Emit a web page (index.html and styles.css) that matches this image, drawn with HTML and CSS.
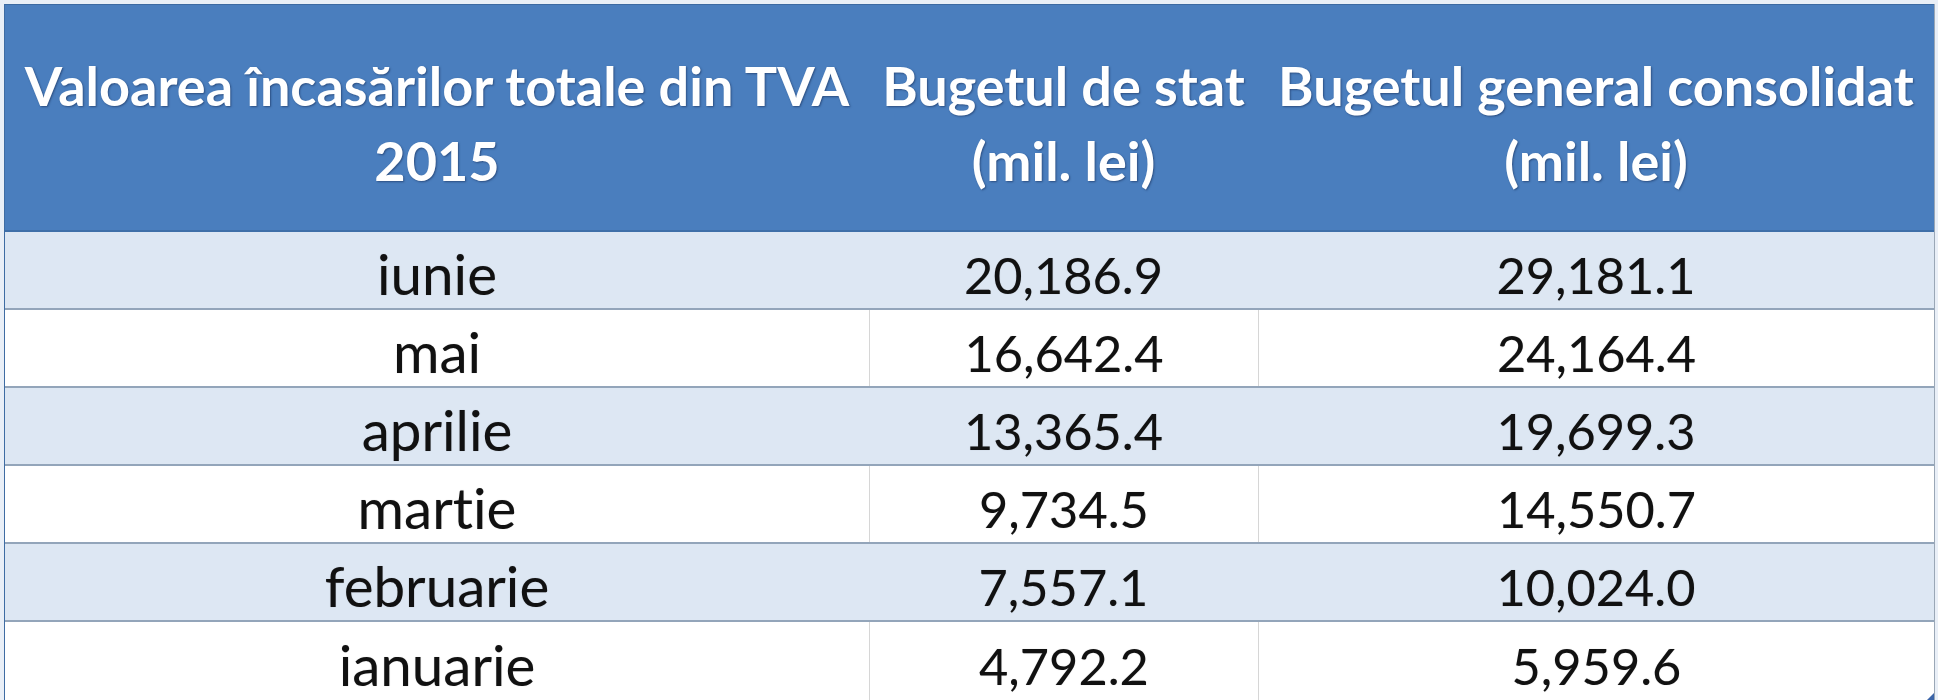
FILE: index.html
```html
<!DOCTYPE html>
<html lang="ro">
<head>
<meta charset="utf-8">
<title>Valoarea încasărilor totale din TVA 2015</title>
<link rel="stylesheet" href="styles.css">
</head>
<body>
<div class="sheet">
  <div class="table">
    <div class="row head">
      <div class="cell">Valoarea încasărilor totale din TVA<br>2015</div>
      <div class="cell">Bugetul de stat<br>(mil. lei)</div>
      <div class="cell">Bugetul general consolidat<br>(mil. lei)</div>
    </div>
    <div class="row band">
      <div class="cell month">iunie</div>
      <div class="cell">20,186.9</div>
      <div class="cell">29,181.1</div>
    </div>
    <div class="row plain">
      <div class="cell month">mai</div>
      <div class="cell">16,642.4</div>
      <div class="cell">24,164.4</div>
    </div>
    <div class="row band">
      <div class="cell month">aprilie</div>
      <div class="cell">13,365.4</div>
      <div class="cell">19,699.3</div>
    </div>
    <div class="row plain">
      <div class="cell month">martie</div>
      <div class="cell">9,734.5</div>
      <div class="cell">14,550.7</div>
    </div>
    <div class="row band">
      <div class="cell month">februarie</div>
      <div class="cell">7,557.1</div>
      <div class="cell">10,024.0</div>
    </div>
    <div class="row plain last">
      <div class="cell month">ianuarie</div>
      <div class="cell">4,792.2</div>
      <div class="cell">5,959.6</div>
    </div>
    <span class="handle"></span>
  </div>
</div>
</body>
</html>
```

FILE: styles.css
```css
html, body {
  margin: 0;
  padding: 0;
  background: #ffffff;
}

.sheet {
  padding: 4px 0 0 4px;
  background: #e9eff7;
  width: 1934px;
  height: 696px;
  overflow: hidden;
}

.table {
  position: relative;
  width: 1929px;
  border-left: 1px solid #3e6ca3;
  border-right: 1px solid #9aa7b6;
  background: #ffffff;
  font-family: "Lato", "Open Sans", sans-serif;
  font-variant-ligatures: none;
}

.row {
  display: grid;
  grid-template-columns: 864px 389px 1fr;
  height: 78px;
  box-sizing: border-box;
  border-bottom: 2px solid #93a5ba;
}

.cell {
  display: flex;
  align-items: center;
  justify-content: center;
  text-align: center;
  white-space: nowrap;
  font-size: 50.5px;
  color: #111111;
  padding-top: 8px;
  text-shadow: 0 0 1px rgba(0, 0, 0, 0.25);
}

.month {
  font-size: 56.5px;
  padding-top: 5px;
}

.head {
  height: 228px;
  background: #4a7ebe;
  border-top: 1px solid #3c6aa2;
  border-bottom: 2px solid #3f6fa8;
}

.head .cell {
  color: #ffffff;
  font-weight: 700;
  line-height: 75px;
  font-size: 54px;
  text-shadow: 1px 1px 2px rgba(20, 40, 80, 0.55);
  padding-top: 10px;
}

.band {
  background: #dde7f3;
}

.plain {
  background: #ffffff;
}

.plain .cell + .cell {
  border-left: 1px solid #d6d6d6;
}

.last {
  border-bottom: 0;
}

.handle {
  position: absolute;
  right: 0;
  bottom: 0;
  width: 0;
  height: 0;
  border-left: 7px solid transparent;
  border-bottom: 7px solid #3a64a8;
}
```
